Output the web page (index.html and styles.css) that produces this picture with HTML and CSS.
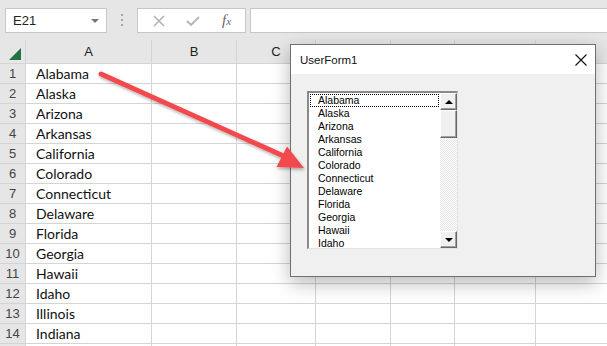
FILE: index.html
```html
<!DOCTYPE html>
<html>
<head>
<meta charset="utf-8">
<link rel="stylesheet" href="styles.css">
</head>
<body>
<div class="app">
  <div class="toolbar">
    <div class="namebox"><span>E21</span><span class="caret"></span></div>
    <div class="grip"><i></i><i></i><i></i></div>
    <div class="fbuttons">
      <svg class="ico" width="12" height="12" viewBox="0 0 12 12"><path d="M1 1L11 11M11 1L1 11" stroke="#b4b4b4" stroke-width="1.6" fill="none"/></svg>
      <svg class="ico" width="14" height="12" viewBox="0 0 14 12"><path d="M1 6L5 10L13 2" stroke="#b4b4b4" stroke-width="1.8" fill="none"/></svg>
      <span class="fx">f<small>x</small></span>
    </div>
    <div class="formula"></div>
  </div>
  <div class="sheet">
    <div class="corner"><span class="tri"></span></div>
    <div class="ch">A</div><div class="ch">B</div><div class="ch">C</div><div class="ch"></div><div class="ch"></div><div class="ch"></div><div class="ch"></div>
    <div class="rh">1</div><div class="c">Alabama</div><div class="c"></div><div class="c"></div><div class="c"></div><div class="c"></div><div class="c"></div><div class="c"></div>
    <div class="rh">2</div><div class="c">Alaska</div><div class="c"></div><div class="c"></div><div class="c"></div><div class="c"></div><div class="c"></div><div class="c"></div>
    <div class="rh">3</div><div class="c">Arizona</div><div class="c"></div><div class="c"></div><div class="c"></div><div class="c"></div><div class="c"></div><div class="c"></div>
    <div class="rh">4</div><div class="c">Arkansas</div><div class="c"></div><div class="c"></div><div class="c"></div><div class="c"></div><div class="c"></div><div class="c"></div>
    <div class="rh">5</div><div class="c">California</div><div class="c"></div><div class="c"></div><div class="c"></div><div class="c"></div><div class="c"></div><div class="c"></div>
    <div class="rh">6</div><div class="c">Colorado</div><div class="c"></div><div class="c"></div><div class="c"></div><div class="c"></div><div class="c"></div><div class="c"></div>
    <div class="rh">7</div><div class="c">Connecticut</div><div class="c"></div><div class="c"></div><div class="c"></div><div class="c"></div><div class="c"></div><div class="c"></div>
    <div class="rh">8</div><div class="c">Delaware</div><div class="c"></div><div class="c"></div><div class="c"></div><div class="c"></div><div class="c"></div><div class="c"></div>
    <div class="rh">9</div><div class="c">Florida</div><div class="c"></div><div class="c"></div><div class="c"></div><div class="c"></div><div class="c"></div><div class="c"></div>
    <div class="rh">10</div><div class="c">Georgia</div><div class="c"></div><div class="c"></div><div class="c"></div><div class="c"></div><div class="c"></div><div class="c"></div>
    <div class="rh">11</div><div class="c">Hawaii</div><div class="c"></div><div class="c"></div><div class="c"></div><div class="c"></div><div class="c"></div><div class="c"></div>
    <div class="rh">12</div><div class="c">Idaho</div><div class="c"></div><div class="c"></div><div class="c"></div><div class="c"></div><div class="c"></div><div class="c"></div>
    <div class="rh">13</div><div class="c">Illinois</div><div class="c"></div><div class="c"></div><div class="c"></div><div class="c"></div><div class="c"></div><div class="c"></div>
    <div class="rh">14</div><div class="c">Indiana</div><div class="c"></div><div class="c"></div><div class="c"></div><div class="c"></div><div class="c"></div><div class="c"></div>
    <div class="rh"></div><div class="c"></div><div class="c"></div><div class="c"></div><div class="c"></div><div class="c"></div><div class="c"></div><div class="c"></div>
  </div>
</div>
<div class="dialog">
  <div class="titlebar"><span>UserForm1</span>
    <svg width="12" height="12" viewBox="0 0 12 12"><path d="M0.5 0.5L11.5 11.5M11.5 0.5L0.5 11.5" stroke="#111" stroke-width="1.1" fill="none"/></svg>
  </div>
  <div class="dbody">
    <div class="listbox">
      <div class="items">
        <div class="item focus">Alabama</div>
        <div class="item">Alaska</div>
        <div class="item">Arizona</div>
        <div class="item">Arkansas</div>
        <div class="item">California</div>
        <div class="item">Colorado</div>
        <div class="item">Connecticut</div>
        <div class="item">Delaware</div>
        <div class="item">Florida</div>
        <div class="item">Georgia</div>
        <div class="item">Hawaii</div>
        <div class="item">Idaho</div>
      </div>
      <div class="vscroll">
        <div class="sbtn"><span class="up"></span></div>
        <div class="thumb"></div>
        <div class="track"></div>
        <div class="sbtn"><span class="down"></span></div>
      </div>
    </div>
  </div>
</div>
<svg class="arrow" width="607" height="346" viewBox="0 0 607 346">
  <defs>
    <filter id="sh" x="-10%" y="-10%" width="120%" height="130%">
      <feDropShadow dx="1" dy="2" stdDeviation="1.5" flood-color="#000" flood-opacity="0.3"/>
    </filter>
  </defs>
  <g filter="url(#sh)" fill="#f24a4e">
    <path d="M101 74L288 158" stroke="#f24a4e" stroke-width="5" stroke-linecap="round"/>
    <path d="M304 168L276.5 167L287 146.5Z"/>
  </g>
</svg>
</body>
</html>
```
FILE: styles.css
```css
html, body { margin: 0; padding: 0; }
body {
  width: 607px; height: 346px; overflow: hidden; position: relative;
  background: #fff;
  font-family: "Lato", "Liberation Sans", sans-serif;
}
.toolbar {
  height: 40px; background: #e6e6e6; display: flex; align-items: flex-start;
  padding: 8px 0 0 5px; box-sizing: border-box;
}
.namebox {
  width: 102px; height: 25px; box-sizing: border-box; background: #fff;
  border: 1px solid #c6c6c6; display: flex; align-items: center;
  justify-content: space-between; padding: 0 7px 0 7px;
  font-family: "Liberation Sans", sans-serif; font-size: 13px; color: #222;
}
.caret { width: 0; height: 0; border-left: 4px solid transparent; border-right: 4px solid transparent; border-top: 4px solid #777; }
.grip { width: 30px; display: flex; flex-direction: column; align-items: center; gap: 3px; padding-top: 6px; }
.grip i { width: 2px; height: 2px; background: #a8a8a8; display: block; }
.fbuttons {
  width: 109px; height: 25px; box-sizing: border-box; background: #fff;
  border: 1px solid #c6c6c6; display: flex; align-items: center; padding: 0 0 0 15px; gap: 21px;
}
.fx { font-family: "Liberation Serif", serif; font-style: italic; font-size: 15px; color: #666; margin-left: 1px; }
.fx small { font-size: 11px; }
.formula { flex: 1; margin-left: 4px; height: 25px; background: #fff; border: 1px solid #c6c6c6; border-right: 0; box-sizing: border-box; }
.sheet {
  display: grid;
  grid-template-columns: 25px 125px 84px 78px 74px 63px 80px 80px;
  grid-template-rows: 23px repeat(15, 19px);
  gap: 1px; background: #d4d4d4;
}
.corner, .ch, .rh { background: #e6e6e6; }
.corner { position: relative; }
.tri { position: absolute; right: 4px; bottom: 3px; width: 0; height: 0; border-left: 12px solid transparent; border-bottom: 12px solid #217346; }
.ch { display: flex; align-items: center; justify-content: center; font-family: "Liberation Sans", sans-serif; font-size: 13px; color: #222; }
.rh { display: flex; align-items: center; justify-content: center; font-family: "Liberation Sans", sans-serif; font-size: 13px; color: #444; }
.c { background: #fff; font-size: 14px; color: #111; padding-left: 10px; display: flex; align-items: center; white-space: nowrap; }
.dialog {
  position: absolute; left: 290px; top: 44px; width: 306px; height: 233px; box-sizing: border-box;
  border: 1px solid #6f6f6f; background: #f0f0f0;
  box-shadow: 0 6px 18px rgba(0,0,0,0.28);
  display: flex; flex-direction: column;
}
.titlebar {
  height: 29px; background: #fff; display: flex; align-items: center; justify-content: space-between;
  padding: 0 8px 0 9px; font-family: "Liberation Sans", sans-serif; font-size: 11.5px; color: #111;
}
.dbody { flex: 1; padding: 17px 0 0 16px; }
.listbox {
  width: 151px; height: 158px; box-sizing: border-box; background: #fff;
  border-style: solid; border-width: 2px 1px 1px 2px;
  border-color: #8a8a8a #e3e3e3 #e3e3e3 #8a8a8a;
  display: flex;
}
.items { flex: 1; padding: 1px 1px 0 1px; font-family: "Liberation Sans", sans-serif; font-size: 10.5px; color: #000; }
.item { height: 13px; line-height: 13px; padding-left: 8px; box-sizing: border-box; }
.item.focus { outline: 1px dotted #000; outline-offset: -1px; }
.vscroll { width: 17px; display: flex; flex-direction: column; }
.sbtn, .thumb {
  background: #f0f0f0; box-sizing: border-box;
  border-style: solid; border-width: 1px; border-color: #fff #696969 #696969 #fff;
  box-shadow: inset -1px -1px 0 #a0a0a0;
}
.sbtn { height: 17px; display: flex; align-items: center; justify-content: center; }
.thumb { height: 28px; }
.track { flex: 1; background: repeating-conic-gradient(#fff 0 25%, #e6e6e6 0 50%) 0 0 / 2px 2px; }
.up { width: 0; height: 0; border-left: 4px solid transparent; border-right: 4px solid transparent; border-bottom: 4px solid #000; }
.down { width: 0; height: 0; border-left: 4px solid transparent; border-right: 4px solid transparent; border-top: 4px solid #000; }
.arrow { position: absolute; left: 0; top: 0; pointer-events: none; }
```
